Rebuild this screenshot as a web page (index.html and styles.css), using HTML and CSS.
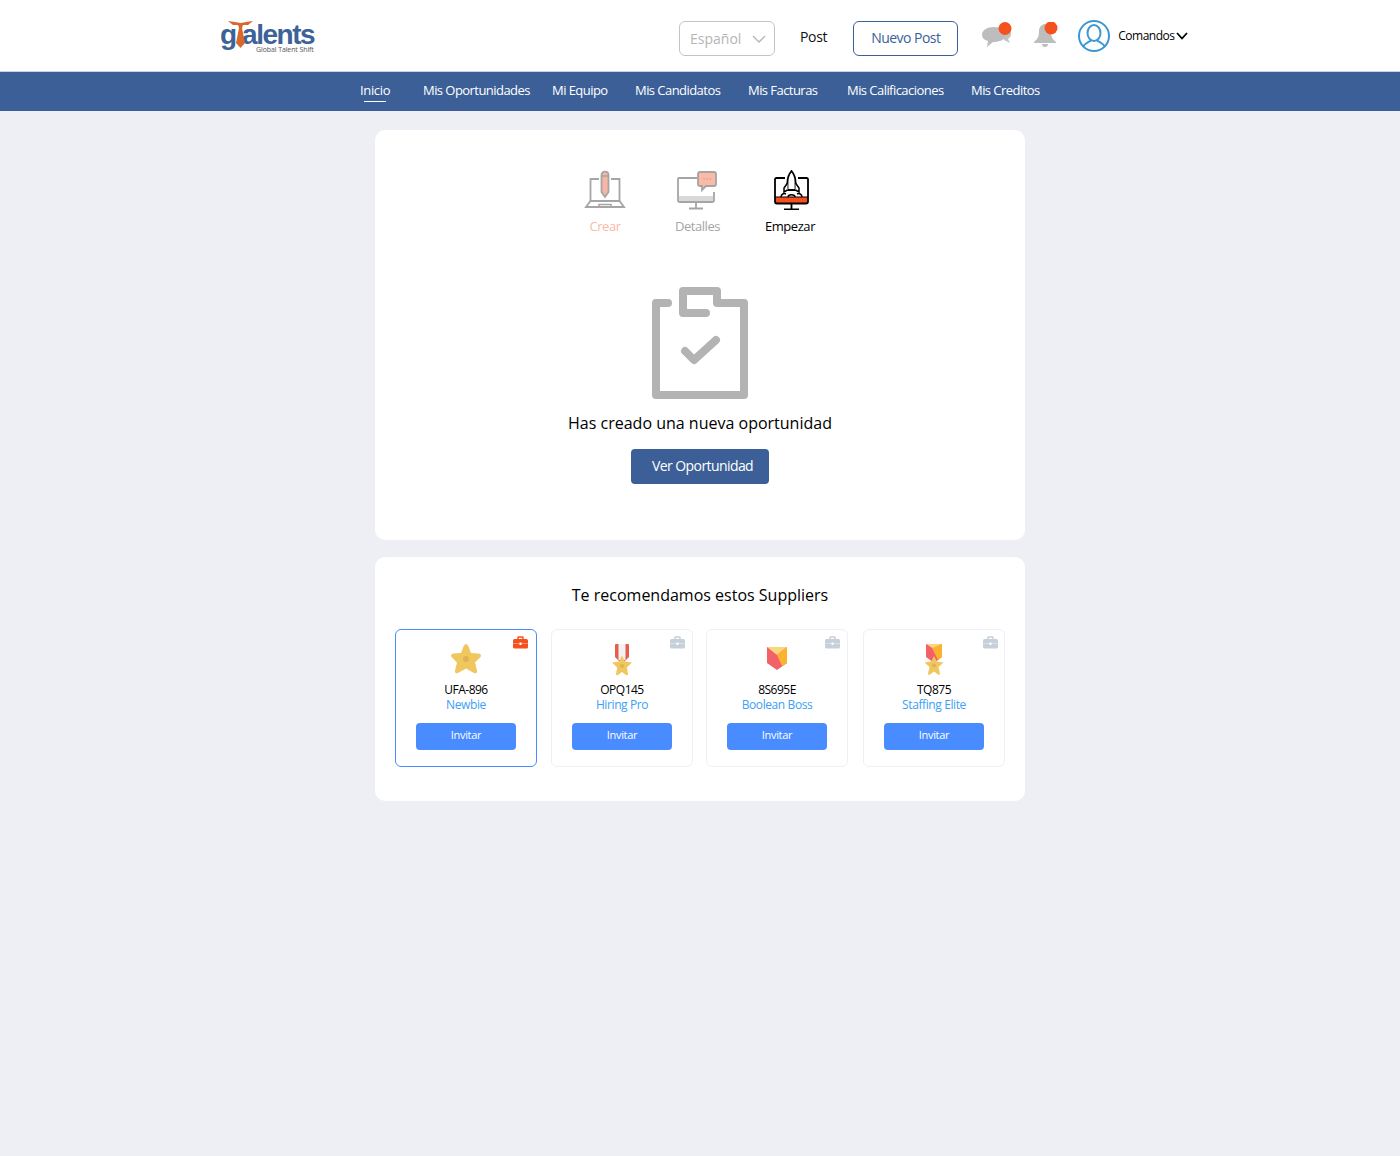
FILE: index.html
```html
<!DOCTYPE html>
<html lang="en">
<head>
    <meta charset="UTF-8">
    <meta name="viewport" content="width=device-width, initial-scale=1.0">
    <title>gTalents</title>
    <link rel="stylesheet" href="styles.css">
</head>
<body>
    <header class="top-bar">
        <div class="logo">
            <div class="logo-word">
                <span>g</span>
                <svg class="logo-tie" width="25" height="27" viewBox="0 0 25 27">
                    <path d="M0 0 C5 1 9 1 12.500 2 C16 1 20 1 25 0 L20 4 H15 L14 7 L17 22 L12.500 27 L8 22 L11 7 L10 4 H5 Z" fill="#d9682c"/>
                </svg>
                <span class="logo-rest">alents</span>
            </div>
            <div class="logo-sub">Global Talent Shift</div>
        </div>
        <div class="lang-select">
            <span>Español</span>
            <svg width="14" height="8" viewBox="0 0 14 8"><path d="M1 1 L7 7 L13 1" fill="none" stroke="#b5b5b5" stroke-width="1.300"/></svg>
        </div>
        <a class="post-link">Post</a>
        <button class="new-post">Nuevo Post</button>
        <div class="icon-badge chat-icon">
            <svg width="30" height="26" viewBox="0 0 30 26">
                <path d="M20 5 C26 5 29 8 29 12 C29 15 27 16 26 17 L28 21 L22 18 Z" fill="#c2c2c2"/>
                <path d="M12 5 C19 5 23 8 23 13 C23 18 18 20 11 20 L5 25 L6 19 C2 18 0 16 0 13 C0 8 5 5 12 5 Z" fill="#bdbdbd"/>
                <circle cx="23" cy="6.500" r="6.500" fill="#f4511e"/>
            </svg>
        </div>
        <div class="icon-badge bell-icon">
            <svg width="25" height="26" viewBox="0 0 25 26">
                <path d="M12 2 C15 2 18 5 18 9 C18 14 19 17 23 20 V21 H1 V20 C5 17 6 14 6 9 C6 5 9 2 12 2 Z" fill="#bdbdbd"/>
                <path d="M9 22 H15 C15 24 14 25 12 25 C10 25 9 24 9 22 Z" fill="#bdbdbd"/>
                <circle cx="18" cy="6" r="6.500" fill="#f4511e"/>
            </svg>
        </div>
        <svg class="avatar" width="32" height="32" viewBox="0 0 32 32">
            <circle cx="16" cy="16" r="15" fill="none" stroke="#3d97d3" stroke-width="2"/>
            <ellipse cx="16" cy="13" rx="6.500" ry="8" fill="none" stroke="#3d97d3" stroke-width="2"/>
            <path d="M5 27 C7 23 10 22 13 20.500 M27 27 C25 23 22 22 19 20.500" fill="none" stroke="#3d97d3" stroke-width="2"/>
        </svg>
        <div class="commands">
            <span>Comandos</span>
            <svg width="12" height="8" viewBox="0 0 12 8"><path d="M1 1 L6 6.500 L11 1" fill="none" stroke="#000" stroke-width="1.800"/></svg>
        </div>
    </header>

    <nav class="main-nav">
        <a class="active">Inicio</a>
        <a>Mis Oportunidades</a>
        <a>Mi Equipo</a>
        <a>Mis Candidatos</a>
        <a>Mis Facturas</a>
        <a>Mis Calificaciones</a>
        <a>Mis Creditos</a>
    </nav>

    <main class="content">
        <section class="panel panel-status">
            <div class="steps">
                <div class="step step-done">
                    <svg width="44" height="40" viewBox="-1 0 44 40">
                        <path d="M15 9 H6.500 V31 M27 9 H35.500 V31" fill="none" stroke="#a5a5a5" stroke-width="1.800"/>
                        <path d="M6.500 31 H35.500 L40 37 H2 Z" fill="none" stroke="#a5a5a5" stroke-width="1.800"/>
                        <path d="M15 37 V34.500 H27 V37" fill="none" stroke="#a5a5a5" stroke-width="1.500"/>
                        <path d="M17.500 5 C17.500 0.500 24.500 0.500 24.500 5 V22 L21 27 L17.500 22 Z" fill="#f7b7a3" stroke="#a5a5a5" stroke-width="1.800"/>
                        <path d="M17.500 6 H24.500" stroke="#a5a5a5" stroke-width="1.500"/>
                    </svg>
                    <span>Crear</span>
                </div>
                <div class="step step-mid">
                    <svg width="44" height="40" viewBox="0 0 44 40">
                        <path d="M21 8 H3 Q2 8 2 9 V30 Q2 32 4 32 H36 Q38 32 38 30 V22" fill="none" stroke="#a5a5a5" stroke-width="1.800"/>
                        <rect x="3" y="26" width="34" height="5" fill="#d9d9d9"/>
                        <path d="M20 32 V38 M13 38.500 H27" fill="none" stroke="#a5a5a5" stroke-width="1.800"/>
                        <path d="M24 2 H38 Q40 2 40 4 V14 Q40 16 38 16 H30 L26 20 V16 H24 Q22 16 22 14 V4 Q22 2 24 2 Z" fill="#fbb9a6" stroke="#a5a5a5" stroke-width="1.800"/>
                        <path d="M27.500 9 H29 M30.500 9 H32 M33.500 9 H35" stroke="#a5a5a5" stroke-width="1"/>
                    </svg>
                    <span>Detalles</span>
                </div>
                <div class="step step-current">
                    <svg width="44" height="40" viewBox="-4 0 44 40">
                        <rect x="3" y="27" width="33" height="6" fill="#f4511e"/>
                        <path d="M13 8 H4.500 Q3 8 3 9.500 V31.500 Q3 33.500 5 33.500 H34 Q36 33.500 36 31.500 V9.500 Q36 8 34.500 8 H26" fill="none" stroke="#000" stroke-width="1.800"/>
                        <path d="M3 27 H36" stroke="#000" stroke-width="1.200"/>
                        <path d="M19.500 33.500 V39 M12 39.500 H27" fill="none" stroke="#000" stroke-width="1.800"/>
                        <path d="M19.500 1 C22 4 23.500 8 23.500 12 V20 H15.500 V12 C15.500 8 17 4 19.500 1 Z" fill="#fff" stroke="#000" stroke-width="1.800"/>
                        <path d="M15.500 13 L12 18 V22 L15.500 20 M23.500 13 L27 18 V22 L23.500 20" fill="#fff" stroke="#000" stroke-width="1.500"/>
                        <path d="M9 27 C9 24 12 23 14 24 M30 27 C30 24 27 23 25 24 M16 27 C16 24 23 24 23 27" fill="none" stroke="#000" stroke-width="1.500"/>
                    </svg>
                    <span>Empezar</span>
                </div>
            </div>
            <svg class="clipboard" width="96" height="112" viewBox="0 0 96 112">
                <path d="M54 26 H31 V4 H65 V16 H92 V108 H4 V16 H16" fill="none" stroke="#b3b3b3" stroke-width="8" stroke-linecap="round" stroke-linejoin="round"/>
                <path d="M33 64 L42 73 L64 53" fill="none" stroke="#b3b3b3" stroke-width="8" stroke-linecap="round" stroke-linejoin="round"/>
            </svg>
            <p class="status-text">Has creado una nueva oportunidad</p>
            <button class="primary-btn">Ver Oportunidad</button>
        </section>

        <section class="panel panel-suppliers">
            <h2>Te recomendamos estos Suppliers</h2>
            <div class="supplier-grid">
                <div class="supplier-card selected">
                    <svg class="case" width="15" height="13" viewBox="0 0 15 13">
                        <path d="M5 3 V1.500 Q5 1 5.500 1 H9.500 Q10 1 10 1.500 V3" fill="none" stroke="#f4511e" stroke-width="1.500"/>
                        <rect y="3" width="15" height="9.500" rx="1.500" fill="#f4511e"/>
                        <path d="M0 7.500 H15" stroke="#fff" stroke-width="0.600" opacity="0.600"/>
                        <rect x="6.500" y="6.500" width="2" height="2.500" fill="#fff"/>
                    </svg>
                    <svg class="badge" width="34" height="34" viewBox="0 1 34 34">
                        <path d="M17 2 Q18.500 2 19.500 4.500 L22 11 L29.500 11.500 Q33 12 31.500 15 L26 20.500 L28 28.500 Q28.500 32 25 31 L17 26.500 L9 31 Q5.500 32 6 28.500 L8 20.500 L2.500 15 Q1 12 4.500 11.500 L12 11 L14.500 4.500 Q15.500 2 17 2 Z" fill="#f0c75e"/>
                        <circle cx="17" cy="17" r="3" fill="#dcb455"/>
                    </svg>
                    <div class="code">UFA-896</div>
                    <div class="tier">Newbie</div>
                    <button class="invite-btn">Invitar</button>
                </div>
                <div class="supplier-card">
                    <svg class="case" width="15" height="13" viewBox="0 0 15 13">
                        <path d="M5 3 V1.500 Q5 1 5.500 1 H9.500 Q10 1 10 1.500 V3" fill="none" stroke="#c5d0da" stroke-width="1.500"/>
                        <rect y="3" width="15" height="9.500" rx="1.500" fill="#c5d0da"/>
                        <path d="M0 7.500 H15" stroke="#fff" stroke-width="0.600" opacity="0.600"/>
                        <rect x="6.500" y="6.500" width="2" height="2.500" fill="#fff"/>
                    </svg>
                    <svg class="badge" width="34" height="34" viewBox="0 0 34 34">
                        <path d="M10 2 Q10 1 11 1 H23 Q24 1 24 2 V14 L20 18 H14 L10 14 Z" fill="#e65c4f"/>
                        <rect x="13.500" y="1" width="7" height="16" fill="#f2f2f2"/>
                        <path d="M17 12.500 L19.800 18.500 L27 19.500 L21.800 24.500 L23 31 Q23 33 21 32 L17 29 L13 32 Q11 33 11 31 L12.200 24.500 L7 19.500 L14.200 18.500 Z" fill="#f0c75e"/>
                        <circle cx="17" cy="23" r="2" fill="#dcb455"/>
                    </svg>
                    <div class="code">OPQ145</div>
                    <div class="tier">Hiring Pro</div>
                    <button class="invite-btn">Invitar</button>
                </div>
                <div class="supplier-card">
                    <svg class="case" width="15" height="13" viewBox="0 0 15 13">
                        <path d="M5 3 V1.500 Q5 1 5.500 1 H9.500 Q10 1 10 1.500 V3" fill="none" stroke="#c5d0da" stroke-width="1.500"/>
                        <rect y="3" width="15" height="9.500" rx="1.500" fill="#c5d0da"/>
                        <path d="M0 7.500 H15" stroke="#fff" stroke-width="0.600" opacity="0.600"/>
                        <rect x="6.500" y="6.500" width="2" height="2.500" fill="#fff"/>
                    </svg>
                    <svg class="badge" width="34" height="34" viewBox="0 0 34 34">
                        <path d="M7 4 H27 V20 L17 27 L7 20 Z" fill="#f4606a"/>
                        <path d="M7 4 H27 L17 12 Z" fill="#fbd77c"/>
                        <path d="M27 4 V20 L22 23 L17 12 Z" fill="#fbb32e"/>
                    </svg>
                    <div class="code">8S695E</div>
                    <div class="tier">Boolean Boss</div>
                    <button class="invite-btn">Invitar</button>
                </div>
                <div class="supplier-card">
                    <svg class="case" width="15" height="13" viewBox="0 0 15 13">
                        <path d="M5 3 V1.500 Q5 1 5.500 1 H9.500 Q10 1 10 1.500 V3" fill="none" stroke="#c5d0da" stroke-width="1.500"/>
                        <rect y="3" width="15" height="9.500" rx="1.500" fill="#c5d0da"/>
                        <path d="M0 7.500 H15" stroke="#fff" stroke-width="0.600" opacity="0.600"/>
                        <rect x="6.500" y="6.500" width="2" height="2.500" fill="#fff"/>
                    </svg>
                    <svg class="badge" width="34" height="34" viewBox="0 0 34 34">
                        <path d="M9 1 H25 V14 L17 20 L9 14 Z" fill="#f4606a"/>
                        <path d="M9 1 H25 L17 6 Z" fill="#fbd77c"/>
                        <path d="M25 1 V14 L21 17 L15 5 Z" fill="#fbb32e"/>
                        <path d="M17 13 L19.800 18.500 L26.500 19.500 L21.500 24 L23 30.500 Q23 32.500 21 31.500 L17 28.500 L13 31.500 Q11 32.500 11 30.500 L12.500 24 L7.500 19.500 L14.200 18.500 Z" fill="#f0c75e"/>
                        <circle cx="17" cy="22.500" r="2" fill="#dcb455"/>
                    </svg>
                    <div class="code">TQ875</div>
                    <div class="tier">Staffing Elite</div>
                    <button class="invite-btn">Invitar</button>
                </div>
            </div>
        </section>
    </main>
</body>
</html>
```

FILE: styles.css
```css
* {
    box-sizing: border-box;
}
body {
    font-family: "Open Sans", sans-serif;
    background-color: #eeeff4;
    margin: 0;
    min-height: 1156px;
}
button {
    font-family: "Open Sans", sans-serif;
    cursor: pointer;
}
.top-bar {
    display: flex;
    align-items: center;
    height: 72px;
    padding-left: 220px;
    background: white;
    border-bottom: 1px solid #c9d3e3;
}
.logo {
    width: 459px;
    margin-top: 4px;
}
.logo-word {
    position: relative;
    display: flex;
    align-items: flex-start;
    height: 25px;
    font-family: "Liberation Sans", sans-serif;
    font-size: 28px;
    line-height: 25px;
    font-weight: bold;
    letter-spacing: -1.5px;
    color: #3c6297;
}
.logo-rest {
    margin-left: 6.5px;
}
.logo-tie {
    position: absolute;
    top: -1px;
    left: 8px;
}
.logo-sub {
    margin: -1px 0 0 36px;
    font-size: 7px;
    line-height: 8px;
    color: #555;
    letter-spacing: -0.1px;
}
.lang-select {
    display: flex;
    align-items: center;
    justify-content: space-between;
    width: 96px;
    height: 35px;
    margin-top: 6px;
    padding: 0 8px 0 10px;
    border: 1px solid #c4c4c4;
    border-radius: 6px;
    font-size: 14px;
    color: #b5b5b5;
}
.post-link {
    margin: 2px 26px 0 25px;
    font-size: 14px;
    letter-spacing: -0.3px;
    color: #111;
}
.new-post {
    width: 105px;
    height: 35px;
    margin-top: 6px;
    padding: 0 0 2px;
    border: 1px solid #3c5f97;
    border-radius: 6px;
    background: white;
    font-size: 14px;
    letter-spacing: -0.55px;
    color: #3c5f97;
}
.icon-badge {
    display: flex;
    height: 26px;
    margin-top: -1px;
}
.chat-icon {
    margin-left: 24px;
}
.bell-icon {
    margin-left: 21px;
}
.avatar {
    margin: 0 0 0 20px;
}
.commands {
    display: flex;
    align-items: center;
    margin-left: 8px;
    font-size: 12px;
    letter-spacing: -0.5px;
    color: #000;
}
.commands svg {
    margin-left: 1px;
}
.main-nav {
    display: grid;
    grid-template-columns: 63px 129px 83px 113px 99px 124px auto;
    justify-content: start;
    height: 39px;
    padding-left: 360px;
    background: #3c5f97;
}
.main-nav a {
    justify-self: start;
    height: 39px;
    font-size: 13px;
    line-height: 36px;
    letter-spacing: -0.55px;
    color: white;
}
.main-nav a.active {
    letter-spacing: -0.35px;
    background: linear-gradient(white, white) center 29px / 22px 1px no-repeat;
}
.content {
    display: flex;
    flex-direction: column;
    align-items: center;
    gap: 17px;
    padding-top: 19px;
}
.panel {
    width: 650px;
    background: white;
    border-radius: 10px;
}
.panel-status {
    display: flex;
    flex-direction: column;
    align-items: center;
    height: 410px;
    padding-top: 40px;
}
.steps {
    display: flex;
    justify-content: center;
    gap: 40.5px;
    margin-bottom: 52px;
    padding-right: 5px;
}
.step {
    display: flex;
    flex-direction: column;
    align-items: center;
    width: 52px;
    font-size: 13px;
    line-height: 18px;
    letter-spacing: -0.45px;
    white-space: nowrap;
}
.step svg {
    margin-bottom: 7px;
}
.step-done {
    color: #fbb9a6;
}
.step-mid {
    color: #a5a5a5;
}
.step-current {
    color: #000;
}
.clipboard {
    display: block;
}
.status-text {
    margin: 13px 0 15px;
    font-size: 16px;
    line-height: 22px;
    color: #000;
}
.primary-btn {
    width: 138px;
    height: 35px;
    padding: 0 16px 2px 21px;
    border: none;
    border-radius: 4px;
    background: #3c5f97;
    font-size: 14px;
    letter-spacing: -0.58px;
    color: white;
    white-space: nowrap;
}
.panel-suppliers {
    height: 244px;
    padding: 27px 20px 0;
}
.panel-suppliers h2 {
    margin: 0 0 23px;
    font-size: 16px;
    line-height: 22px;
    font-weight: normal;
    text-align: center;
    color: #000;
}
.supplier-grid {
    display: grid;
    grid-template-columns: repeat(4, 142px);
    gap: 14px;
}
.supplier-card {
    position: relative;
    display: flex;
    flex-direction: column;
    align-items: center;
    height: 138px;
    padding-top: 13px;
    border: 1px solid #eef0f6;
    border-radius: 6px;
}
.supplier-card:nth-child(3) {
    margin: 0 1px 0 -1px;
}
.supplier-card.selected {
    border-color: #488cff;
}
.case {
    position: absolute;
    top: 6px;
    right: 8px;
}
.supplier-card:nth-child(2) .case,
.supplier-card:nth-child(3) .case {
    right: 7px;
}
.supplier-card:nth-child(4) .case {
    right: 6px;
}
.badge {
    display: block;
    margin-bottom: 5px;
}
.code {
    font-size: 12px;
    line-height: 16px;
    letter-spacing: -0.5px;
    color: #000;
}
.tier {
    font-size: 12px;
    line-height: 14px;
    letter-spacing: -0.4px;
    color: #3da0f5;
}
.invite-btn {
    width: 100px;
    height: 27px;
    margin-top: 11px;
    padding: 0 0 5px;
    border: none;
    border-radius: 4px;
    background: #488cff;
    font-size: 11px;
    letter-spacing: -0.3px;
    color: white;
}
```
